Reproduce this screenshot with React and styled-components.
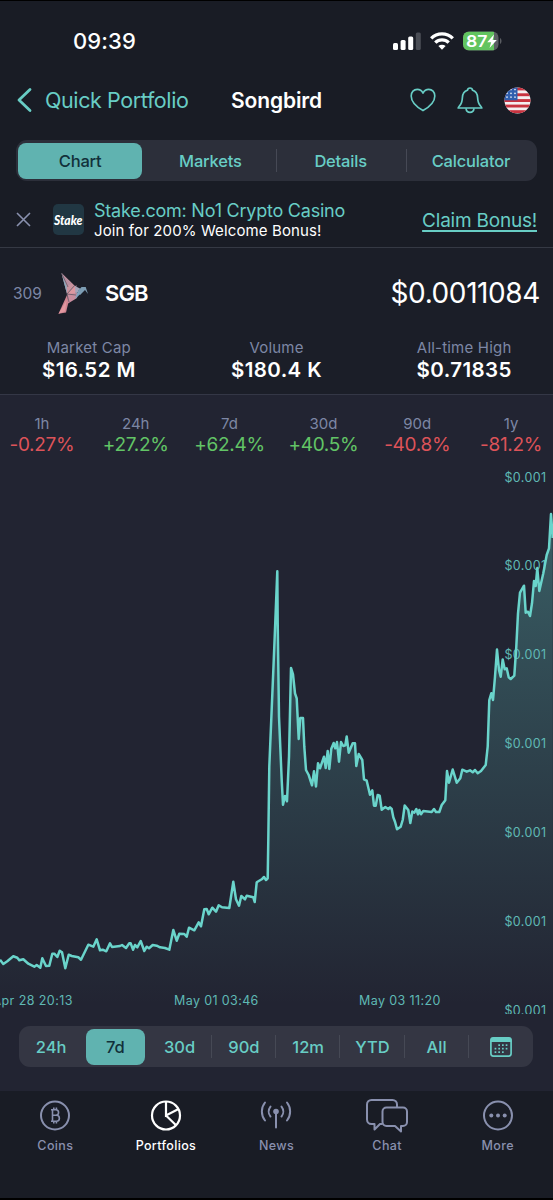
import styled, { createGlobalStyle } from 'styled-components';

const GlobalStyle = createGlobalStyle`
  * {
    box-sizing: border-box;
  }

  body {
    margin: 0;
    background: #191c25;
    font-family: Inter, 'Liberation Sans', sans-serif;
    color: #fff;
  }

  svg {
    display: block;
    flex-shrink: 0;
  }
`;

const Screen = styled.div`
  width: 553px;
  height: 1200px;
  overflow: hidden;
  display: flex;
  flex-direction: column;
  background: #191c25;
  border-top: 1px solid #000;
  border-bottom: 2px solid #000;
`;

const StatusBar = styled.header`
  height: 69px;
  padding: 10px 51px 0 73px;
  display: flex;
  align-items: center;
  justify-content: space-between;
`;

const Time = styled.span`
  font-size: 22px;
  font-weight: 500;
  letter-spacing: 0.1px;
`;

const StatusIcons = styled.div`
  display: flex;
  align-items: center;
  gap: 9px;
`;

const NavBar = styled.nav`
  height: 60px;
  padding: 0 16px;
  display: grid;
  grid-template-columns: 1fr auto 1fr;
  align-items: center;
`;

const Back = styled.button`
  display: flex;
  align-items: center;
  gap: 12px;
  padding: 0;
  border: none;
  background: none;
  color: #68cdc5;
  font: 400 21.5px Inter, sans-serif;
  letter-spacing: -0.4px;
  white-space: nowrap;
`;

const Title = styled.h1`
  margin: 0;
  font-size: 21px;
  font-weight: 600;
  letter-spacing: -0.1px;
`;

const Actions = styled.div`
  display: flex;
  justify-content: flex-end;
  align-items: center;
  gap: 21px;
  padding-right: 6px;
`;

const Segments = styled.div`
  display: flex;
  height: 41px;
  margin: ${(props) => props.$margin};
  padding: 3px 0;
  border-radius: 11px;
  background: ${(props) => props.$bg};
`;

const Segment = styled.button`
  flex: 1 1 0;
  min-width: 0;
  margin: 0;
  padding: ${(props) => props.$pad || '0 3px'};
  border: none;
  background: none;
  display: flex;
  align-items: center;
  font: ${(props) => (props.$active ? 500 : 450)} 16.5px Inter, sans-serif;
  letter-spacing: ${(props) => props.$spacing || '0'};
  color: ${(props) => (props.$active ? '#12303a' : '#68cdc5')};
  box-shadow: ${(props) => (props.$divider ? '-1px 0 0 #464955' : 'none')};
  height: ${(props) => (props.$divider ? '23px' : '100%')};
  align-self: center;

  span {
    flex: 1;
    height: 36px;
    display: flex;
    align-items: center;
    justify-content: center;
    border-radius: 8px;
    background: ${(props) => (props.$active ? '#60b3b0' : 'transparent')};
  }
`;

const Promo = styled.section`
  height: 67px;
  padding: 0 16px;
  display: flex;
  align-items: center;
  border-bottom: 1.5px solid #353944;
`;

const PromoLogo = styled.div`
  width: 31px;
  height: 31px;
  margin: 11px 10px 0 22px;
  border-radius: 5px;
  overflow: hidden;
  background: #213743;
`;

const CloseIcon = styled.svg`
  margin-top: 11px;
`;

const PromoText = styled.div`
  flex: 1;
  padding-top: 11px;
  white-space: nowrap;
`;

const PromoTitle = styled.div`
  font-size: 18px;
  line-height: 21px;
  color: #68cdc5;
  letter-spacing: -0.23px;
`;

const PromoNote = styled.div`
  font-size: 15px;
  line-height: 19px;
  letter-spacing: 0.12px;
`;

const PromoLink = styled.a`
  padding-top: 12px;
  font-size: 19px;
  letter-spacing: -0.22px;
  color: #68cdc5;
  text-decoration: underline;
  text-underline-offset: 3px;
  text-decoration-thickness: 1.5px;
`;

const Summary = styled.section`
  height: 147px;
  background: #1b1e28;
  border-bottom: 1px solid #343746;
`;

const CoinRow = styled.div`
  height: 90px;
  padding: 0 13px;
  display: flex;
  align-items: center;
`;

const Rank = styled.span`
  width: 45px;
  font-size: 15.5px;
  color: #7d87a5;
`;

const Symbol = styled.span`
  flex: 1;
  margin-left: 15px;
  font-size: 22px;
  font-weight: 600;
  letter-spacing: -0.9px;
`;

const Price = styled.span`
  font-size: 28px;
  letter-spacing: -0.4px;
`;

const Stats = styled.div`
  display: grid;
  grid-template-columns: repeat(3, 1fr);
  margin: 0 -5px;
  text-align: center;
`;

const StatLabel = styled.div`
  font-size: 15px;
  line-height: 19px;
  color: #7d87a5;
  letter-spacing: 0.2px;
`;

const StatValue = styled.div`
  font-size: 20.5px;
  font-weight: 600;
  line-height: 26px;
  letter-spacing: 0.4px;
`;

const ChartArea = styled.section`
  flex: 1;
  min-height: 0;
  background: #222432;
`;

const Changes = styled.div`
  height: 70px;
  padding-top: 19px;
  margin: 0 -5px;
  display: grid;
  grid-template-columns: repeat(6, 1fr);
  text-align: center;
`;

const ChangeLabel = styled.div`
  font-size: 15px;
  line-height: 20px;
  color: #7d87a5;
`;

const ChangeValue = styled.div`
  font-size: 19px;
  line-height: 22px;
  letter-spacing: -0.3px;
  color: ${(props) => (props.$down ? '#dd5359' : '#62c466')};
`;

const AxisText = styled.text`
  font: 400 12.5px Inter, sans-serif;
  letter-spacing: ${(props) => props.$spacing};
  fill: #5fb9b5;
`;

const TabBar = styled.footer`
  height: 107px;
  padding-top: 5px;
  display: grid;
  grid-template-columns: repeat(5, 1fr);
`;

const TabItem = styled.div`
  display: flex;
  flex-direction: column;
  align-items: center;
  font-size: 12.5px;
  font-weight: 500;
  line-height: 18px;
  letter-spacing: 0.35px;
  color: ${(props) => (props.$active ? '#fff' : '#8990ae')};

  svg {
    margin-bottom: 3px;
  }
`;

const LINE = `0,959.7 3.3,964 7.3,961.3 13.3,956.3 17.3,957.7 19.3,960.3 23.3,959.3 28.3,963.7 34.3,966.7
  36.7,965 40.3,967.7 42.3,958.3 46,966 49.3,965.7 52.3,953.7 54.3,953.7 57.3,957 59.7,950.7 62,952.3
  65.3,968.3 68.7,954.7 71.7,956 78.3,957.3 81,959.7 88.3,944.7 93.3,946.7 96.7,939.3 100,950.3 102.7,949.7
  106.3,951.3 110,943.3 112,947 120,946 122,945 126,948 129.3,943.3 130.7,943.3 133,949.7 135,945 137.3,947.3
  140.7,941 144.3,951 146.7,946.7 149,948.3 152.7,945 156.7,945.7 160,947.3 165,948 169.3,949.7 173.3,930
  176.7,940.7 179.3,933.7 184.3,934 186.7,936.7 189,927.7 194.3,930.3 198.7,922.3 201,926.3 204.3,909.3
  206.7,909 208.7,914.3 212.3,907.7 216,911.7 218.7,905.3 222,907.3 229.3,908 233.3,881.7 236,899.3 239,905.7
  241.3,896 245,899.3 246.7,895.7 253.3,897.3 254.7,902 256.7,882.3 261.7,879.3 264,877 266,880 267.7,878.3
  268.3,840 269.3,766.7 274.3,646.7 277.3,571.3 277.7,623 279,716.7 281.7,780 283,804.7 285,796 287,801.3
  289,756.7 291,668 293,674.3 295,693.3 296.7,698.3 298.7,739 300.3,718 303,718 304.3,746.7 306,770 308.7,775
  312,785.3 314,771.3 316,786.5 318,763.3 320,768.3 324,756.7 325.7,768 327.7,751 329.3,769 331.3,748.7
  333.7,743 335.3,748.3 337,742 339,761.7 341,742 343.3,746 345.3,745.3 346.7,736.5 348.7,752.7 352.7,743.3
  355,743.3 356.3,766 358.7,754 362.3,760 364,779.3 366.7,780.7 370,794.7 372.3,790.3 374,805.7 375.7,805.7
  377.7,795 379.7,795.7 381.7,809.7 385.3,807 388.3,809 390,807.3 391.7,809 393.3,817.3 395,821.7 397,829.3
  400.7,826.7 402.7,820 404.7,805.5 408.3,810 410.3,823 412.3,811.5 414.3,812.7 416.3,809 418,814.3 419.3,810
  421,814.3 423.3,811 431.7,812 434,809 436,812 439.3,812 441.7,805 445.3,800.3 447,771 449,782.7 452.7,769.5
  456.7,782.7 460.3,778.3 462.3,769.7 466.7,771.7 470,770.3 472.7,772.3 475,770 477.7,773.3 481,771 485.7,765
  487.7,746.7 489.3,700 491.3,693.3 493,700 495,676.7 497,649.5 499,670 500.7,676.7 502.7,659.5 504.7,669.3
  506.7,668.3 508.7,677.3 510.7,679 514.3,675.7 516.3,646.7 518,613.3 520,592.7 524,585.7 525.7,612.7
  528,611.7 530,616 532,603.3 534,581 535.7,586 537.3,568 539.3,591 543.3,573.3 546.7,555 549,548.3 551,514
  552.7,538`;

const tabs = ['Chart', 'Markets', 'Details', 'Calculator'];
const ranges = ['24h', '7d', '30d', '90d', '12m', 'YTD', 'All'];

const stats = [
  { label: 'Market Cap', value: '$16.52 M' },
  { label: 'Volume', value: '$180.4 K' },
  { label: 'All-time High', value: '$0.71835' },
];

const changes = [
  { label: '1h', value: '-0.27%' },
  { label: '24h', value: '+27.2%' },
  { label: '7d', value: '+62.4%' },
  { label: '30d', value: '+40.5%' },
  { label: '90d', value: '-40.8%' },
  { label: '1y', value: '-81.2%' },
];

const priceLabels = [481.7, 570.4, 659.3, 748.1, 836.9, 925.7, 1014.5];

function Signal() {
  return (
    <svg width="28" height="18" viewBox="0 0 28 18" fill="#fff">
      <rect x="0" y="11" width="5" height="7" rx="1.5" />
      <rect x="7.6" y="8" width="5" height="10" rx="1.5" />
      <rect x="15.2" y="4.5" width="5" height="13.5" rx="1.5" />
      <rect x="22.8" y="0.5" width="5" height="17.5" rx="1.5" fill="#4a4d55" />
    </svg>
  );
}

function Wifi() {
  return (
    <svg width="24" height="18" viewBox="0 0 24 18" fill="none" stroke="#fff" strokeWidth="3.3">
      <path d="M1.2 6.3a15.3 15.3 0 0 1 21.6 0" />
      <path d="M5.3 10.7a9.5 9.5 0 0 1 13.4 0" />
      <path d="M12 17.8l-3.6-3.7a5.2 5.2 0 0 1 7.2 0z" fill="#fff" stroke="none" />
    </svg>
  );
}

function Battery() {
  return (
    <svg width="39" height="20" viewBox="0 0 39 20">
      <defs>
        <clipPath id="charge">
          <rect x="0" y="0.5" width="31" height="19" />
        </clipPath>
      </defs>
      <rect x="0" y="0.5" width="35.5" height="19" rx="6" fill="#5a5d62" />
      <rect x="0" y="0.5" width="35.5" height="19" rx="6" fill="#62c45f" clipPath="url(#charge)" />
      <path d="M37 7c2 .8 2 5.200 0 6z" fill="#5a5d62" />
      <text x="3" y="15.900" fill="#fff" fontFamily="Inter" fontSize="16.500" fontWeight="600" textLength="21.500" lengthAdjust="spacingAndGlyphs">87</text>
      <path d="M31 3.500l-6.800 7.700h4l-1.700 5.800 7.300-8h-4.200z" fill="#fff" />
    </svg>
  );
}

function Heart() {
  return (
    <svg width="26" height="24" viewBox="0.5 0 26 25" fill="none" stroke="#68cdc5" strokeWidth="1.700" strokeLinejoin="round">
      <path d="M13.500 23.500C10 21.500 1.200 15.500 1.200 8.300 1.200 4.200 4 1.400 7.500 1.400c2.500 0 4.700 1.300 6 3.900 1.300-2.600 3.500-3.900 6-3.900 3.500 0 6.300 2.800 6.300 6.900 0 7.200-8.800 13.200-12.300 15.200z" />
    </svg>
  );
}

function Bell() {
  return (
    <svg width="26" height="27" viewBox="0 0 26 27" fill="none" stroke="#68cdc5" strokeWidth="1.700" strokeLinejoin="round">
      <path d="M10.400 3.300C10.600 1.800 11.600 1 13 1s2.400.8 2.600 2.300c3.200 1 4.800 3.900 5 7.200.2 4.500.8 6.500 3 8.500.8.8 1.200 1.200 1.200 2H1.200c0-.8.4-1.200 1.200-2 2.200-2 2.800-4 3-8.500.2-3.300 1.800-6.200 5-7.200z" />
      <path d="M9 21.300c.3 2.600 1.800 4 4 4s3.700-1.400 4-4" />
    </svg>
  );
}

function Flag() {
  return (
    <svg width="27" height="27" viewBox="0 0 27 27">
      <defs>
        <clipPath id="flag">
          <circle cx="13.500" cy="13.500" r="13" />
        </clipPath>
      </defs>
      <g clipPath="url(#flag)">
        <rect width="27" height="27" fill="#f3eef0" />
        {[0.5, 6.3, 12.1, 17.6, 23.2].map((y) => (
          <rect key={y} y={y} width="27" height="2.900" fill="#c8323f" />
        ))}
        <rect width="13.500" height="13.300" fill="#2f5fae" />
        {[2.5, 6.3, 10.1].map((y) =>
          [3, 7, 11].map((x) => <circle key={`${x}-${y}`} cx={x} cy={y} r="0.850" fill="#e8eef8" />)
        )}
      </g>
    </svg>
  );
}

function Bird() {
  return (
    <svg width="32" height="42" viewBox="1.500 0 32 42" strokeLinejoin="round">
      <path d="M5 1L18.500 14 22 20 10.500 22z" fill="#c9939f" />
      <path d="M5 1L10 14l.5 8L7 9z" fill="#86aabd" />
      <path d="M5 1L15 11.500 11 14z" fill="#b98d9e" />
      <path d="M10.500 22L20 13l-1 9z" fill="#dd98a1" />
      <path d="M18.500 14l5 2.500-4.500 6z" fill="#a4a5ba" />
      <path d="M10.500 22l11-1-1 5-9 5.500z" fill="#c98d9e" />
      <path d="M20.500 21l3-5 1.500 5-6.500 6z" fill="#7ea2bd" />
      <path d="M21.500 19l3.500-4 4.200 0 2.300 7-3-4-5 5z" fill="#7d9db4" />
      <path d="M10.500 23l1.500 7-2.500 10.500-7.500 1.200z" fill="#cf8491" />
      <path d="M10 28.500L2 41.700l6.500-2.500z" fill="#e398a0" />
      <path d="M10.500 22l9 1M10.500 22l8-9M10.500 22l2 8M5 1l6.500 14" stroke="#55515f" strokeWidth="0.700" fill="none" />
    </svg>
  );
}

function PriceChart() {
  return (
    <svg width="553" height="549" viewBox="0 465 553 549">
      <defs>
        <linearGradient id="area" gradientUnits="userSpaceOnUse" x1="0" y1="513" x2="0" y2="1005">
          <stop offset="0" stopColor="#68d4cb" stopOpacity="0.330" />
          <stop offset="1" stopColor="#68d4cb" stopOpacity="0" />
        </linearGradient>
      </defs>
      <polygon points={`0,1014 ${LINE} 553,1014`} fill="url(#area)" />
      {priceLabels.map((y) => (
        <AxisText key={y} x="504.500" y={y} $spacing="0.35px">$0.001</AxisText>
      ))}
      <AxisText x="-7.500" y="1005.200" $spacing="0.42px">Apr 28 20:13</AxisText>
      <AxisText x="174" y="1005.200" $spacing="0.38px">May 01 03:46</AxisText>
      <AxisText x="359" y="1005.200" $spacing="0.4px">May 03 11:20</AxisText>
      <polyline points={LINE} fill="none" stroke="#6ad4cb" strokeWidth="2.500" strokeLinejoin="round" />
    </svg>
  );
}

function CalendarIcon() {
  return (
    <svg width="22" height="20" viewBox="0 0 22 20">
      <rect x="0.900" y="0.900" width="20.200" height="18.200" rx="2.500" fill="none" stroke="#68cdc5" strokeWidth="1.700" />
      <path d="M0.500 5V3a2.500 2.500 0 0 1 2.500-2.500h16a2.500 2.500 0 0 1 2.500 2.500V5z" fill="#68cdc5" />
      {[8, 11.5, 15].map((y, row) =>
        [5.5, 9.2, 12.9, 16.6]
          .filter((x, col) => !(row === 0 && col === 0) && !(row === 2 && col === 3))
          .map((x) => <rect key={`${x}-${y}`} x={x - 0.9} y={y - 0.7} width="1.700" height="1.700" fill="#68cdc5" />)
      )}
    </svg>
  );
}

function CoinIcon() {
  return (
    <svg width="42" height="38" viewBox="0 0 42 38" fill="none" stroke="currentColor" strokeWidth="2">
      <circle cx="21" cy="19.500" r="14" />
      <path d="M17 13.800h4.800a2.700 2.700 0 0 1 0 5.500h-3.200 3.800a3 3 0 0 1 0 6h-5.400M18.500 13.800v11.500M19.800 11.500v2.300M22.400 11.500v2.300M19.800 25.300v2.300M22.400 25.300v2.300" strokeWidth="1.600" />
    </svg>
  );
}

function PieIcon() {
  return (
    <svg width="42" height="38" viewBox="0 0 42 38" fill="none" stroke="currentColor" strokeWidth="2.200">
      <circle cx="21" cy="19.500" r="14" />
      <path d="M21 5.500v14l12.500-6.500M21 19.500l9.800 9.500" />
    </svg>
  );
}

function AntennaIcon() {
  return (
    <svg width="42" height="38" viewBox="0 0 42 38" fill="none" stroke="currentColor" strokeWidth="2" strokeLinecap="round">
      <circle cx="21" cy="15.500" r="2.800" fill="currentColor" stroke="none" />
      <path d="M21 16v15.500" />
      <path d="M15.500 10.500a8 8 0 0 0 0 10M26.500 10.500a8 8 0 0 1 0 10" />
      <path d="M10 6.500a14.500 14.500 0 0 0 0 18M32 6.500a14.500 14.500 0 0 1 0 18" />
    </svg>
  );
}

function ChatIcon() {
  return (
    <svg width="42" height="38" viewBox="0 0 42 38" fill="none" stroke="currentColor" strokeWidth="2" strokeLinejoin="round">
      <path d="M31 11V8.500A4.500 4.500 0 0 0 26.500 4h-21A4.500 4.500 0 0 0 1 8.500v15A4.500 4.500 0 0 0 5.500 28h3v5.500l5.500-5.500h2.500" />
      <path d="M20.500 11.500h16.500a4 4 0 0 1 4 4V26a4 4 0 0 1-4 4h-2v5.500L29 30h-8.500a4 4 0 0 1-4-4V15.500a4 4 0 0 1 4-4z" />
    </svg>
  );
}

function MoreIcon() {
  return (
    <svg width="42" height="38" viewBox="0 0 42 38" fill="none" stroke="currentColor" strokeWidth="2">
      <circle cx="21" cy="19.500" r="14" />
      <g fill="currentColor" stroke="none">
        <circle cx="14.300" cy="19.500" r="2" />
        <circle cx="21" cy="19.500" r="2" />
        <circle cx="27.700" cy="19.500" r="2" />
      </g>
    </svg>
  );
}

const menu = [
  { label: 'Coins', Icon: CoinIcon },
  { label: 'Portfolios', Icon: PieIcon, active: true },
  { label: 'News', Icon: AntennaIcon },
  { label: 'Chat', Icon: ChatIcon },
  { label: 'More', Icon: MoreIcon },
];

function App() {
  return (
    <Screen>
      <GlobalStyle />
      <StatusBar>
        <Time>09:39</Time>
        <StatusIcons>
          <Signal />
          <Wifi />
          <Battery />
        </StatusIcons>
      </StatusBar>

      <NavBar>
        <Back>
          <svg width="17" height="26" viewBox="0 0 17 26" fill="none" stroke="#68cdc5" strokeWidth="2.800" strokeLinecap="round" strokeLinejoin="round">
            <path d="M14 2.500L3 13l11 10.500" />
          </svg>
          Quick Portfolio
        </Back>
        <Title>Songbird</Title>
        <Actions>
          <Heart />
          <Bell />
          <Flag />
        </Actions>
      </NavBar>

      <Segments $margin="10px 16px 0" $bg="#2c2f3a">
        {tabs.map((tab, i) => (
          <Segment key={tab} $active={i === 0} $divider={i > 1} $spacing="-0.2px" $pad="0 4px 0 2px">
            <span>{tab}</span>
          </Segment>
        ))}
      </Segments>

      <Promo>
        <CloseIcon width="15" height="15" viewBox="0 0 15 15" stroke="#8990ae" strokeWidth="1.600">
          <path d="M1 1l13 13M14 1L1 14" />
        </CloseIcon>
        <PromoLogo>
          <svg width="31" height="31" viewBox="0 0 31 31">
            <text x="1" y="20.500" fill="#fff" fontFamily="Lato" fontStyle="italic" fontWeight="900" fontSize="13" textLength="28.500" lengthAdjust="spacingAndGlyphs">Stake</text>
          </svg>
        </PromoLogo>
        <PromoText>
          <PromoTitle>Stake.com: No1 Crypto Casino</PromoTitle>
          <PromoNote>Join for 200% Welcome Bonus!</PromoNote>
        </PromoText>
        <PromoLink>Claim Bonus!</PromoLink>
      </Promo>

      <Summary>
        <CoinRow>
          <Rank>309</Rank>
          <Bird />
          <Symbol>SGB</Symbol>
          <Price>$0.0011084</Price>
        </CoinRow>
        <Stats>
          {stats.map((stat) => (
            <div key={stat.label}>
              <StatLabel>{stat.label}</StatLabel>
              <StatValue>{stat.value}</StatValue>
            </div>
          ))}
        </Stats>
      </Summary>

      <ChartArea>
        <Changes>
          {changes.map((change) => (
            <div key={change.label}>
              <ChangeLabel>{change.label}</ChangeLabel>
              <ChangeValue $down={change.value.startsWith('-')}>{change.value}</ChangeValue>
            </div>
          ))}
        </Changes>
        <PriceChart />
        <Segments $margin="12px 20px 0 19px" $bg="#343643">
          {ranges.map((range, i) => (
            <Segment key={range} $active={range === '7d'} $divider={i > 2}>
              <span>{range}</span>
            </Segment>
          ))}
          <Segment $divider>
            <span>
              <CalendarIcon />
            </span>
          </Segment>
        </Segments>
      </ChartArea>

      <TabBar>
        {menu.map(({ label, Icon, active }) => (
          <TabItem key={label} $active={active}>
            <Icon />
            {label}
          </TabItem>
        ))}
      </TabBar>
    </Screen>
  );
}

export default App;
